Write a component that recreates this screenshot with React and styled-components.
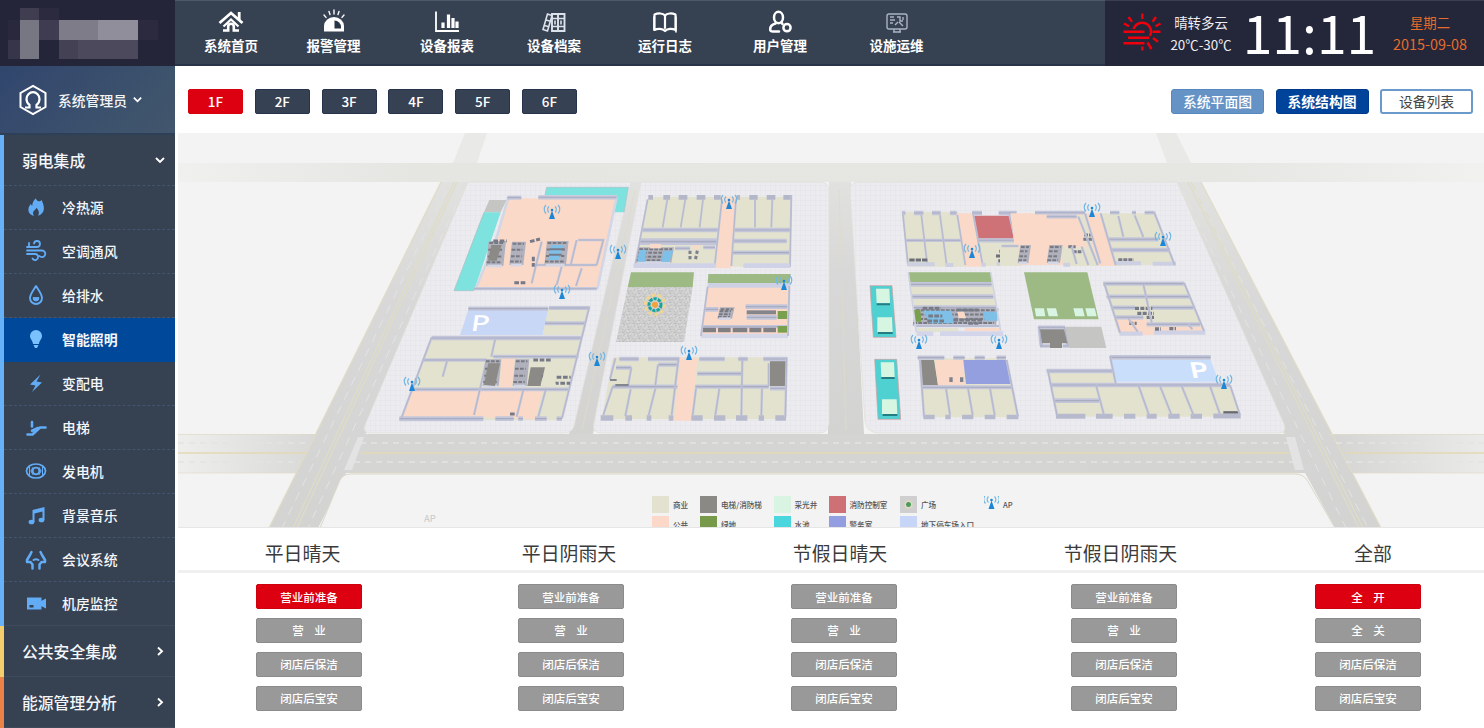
import React from 'react';
import styled, { createGlobalStyle } from 'styled-components';

const GlobalStyle = createGlobalStyle`
  * { box-sizing: border-box; }
  html, body { margin: 0; padding: 0; }
  body {
    width: 1484px;
    height: 728px;
    overflow: hidden;
    background: #fff;
    font-family: "Noto Sans CJK SC", sans-serif;
  }
`;

const Page = styled.div`
  width: 1484px;
  height: 728px;
  display: flex;
  flex-direction: column;
  overflow: hidden;
`;

const Header = styled.header`
  flex: none;
  height: 66px;
  display: flex;
  background: #364152;
  box-shadow: inset 0 1px 0 #4d5969, inset 0 -2px 0 #2a3448;
`;

const Logo = styled.div`
  width: 175px;
  height: 66px;
  background: #242539;
  svg { display: block; }
`;

const Nav = styled.nav`
  flex: 1;
  display: flex;
  padding-left: 28px;
`;

const NavItem = styled.a`
  width: 56px;
  margin-right: ${(p) => p.$gap}px;
  padding-top: 9px;
  display: flex;
  flex-direction: column;
  align-items: center;
  color: #fff;
  font-size: 13.5px;
  font-weight: 700;
  line-height: 18px;
  white-space: nowrap;
  svg { display: block; width: 26px; height: 26px; margin-bottom: 1px; }
`;

const Status = styled.div`
  width: 379px;
  display: flex;
  background: #24263a;
  color: #f2f2f5;
  box-shadow: inset 0 1px 0 #3c3f50;
`;

const SunIcon = styled.svg`
  width: 40px;
  height: 40px;
  margin: 12px 0 0 17px;
`;

const StatusColumn = styled.div`
  width: ${(p) => p.$width}px;
  padding-top: 11px;
  display: flex;
  flex-direction: column;
  align-items: center;
  color: ${(p) => p.$color};
  font-size: 13.4px;
  line-height: 22px;
  white-space: nowrap;
`;

const DateText = styled.span`
  font-size: 14.4px;
`;

const Clock = styled.div`
  width: 148px;
  padding-right: 9px;
  text-align: center;
  color: #fff;
  font-size: 53.5px;
  line-height: 61px;
`;

const Body = styled.div`
  flex: 1;
  display: flex;
  min-height: 0;
`;

const Sidebar = styled.aside`
  width: 175px;
  flex: none;
  display: flex;
  flex-direction: column;
  background: #364152;
  color: #f4f6f9;
`;

const UserBox = styled.div`
  height: 69px;
  padding: 0 0 0 19px;
  display: flex;
  align-items: center;
  background: linear-gradient(135deg, #31466d, #42576c);
  border-bottom: 2px solid #2e4057;
  font-size: 13.8px;
  font-weight: 500;
  svg { flex: none; }
`;

const UserName = styled.span`
  margin: 0 5px 0 11px;
`;

const Group = styled.section`
  border-left: 4px solid ${(p) => p.$accent};
`;

const GroupTitle = styled.div`
  height: 51px;
  padding: 0 9px 0 18px;
  display: flex;
  align-items: center;
  justify-content: space-between;
  font-size: 15.8px;
  font-weight: 500;
  border-bottom: ${(p) => (p.$open ? '1px dashed #435570' : '1px solid #3e4b5d')};
`;

const MenuItem = styled.div`
  height: 44px;
  padding: 0 0 1px 20px;
  display: flex;
  align-items: center;
  gap: 14px;
  font-size: 13.9px;
  font-weight: ${(p) => (p.$active ? 700 : 500)};
  background: ${(p) => (p.$active ? '#00489a' : 'transparent')};
  border-bottom: 1px ${(p) => (p.$plain ? 'solid #3e4b5d' : p.$active ? 'solid #00489a' : 'dashed #435570')};
  svg { width: 24px; height: 24px; flex: none; color: #62abf5; }
`;

const Main = styled.main`
  flex: 1;
  min-width: 0;
  display: flex;
  flex-direction: column;
  padding-left: 3px;
`;

const Toolbar = styled.div`
  height: 67px;
  padding: 3px 11px 0 10px;
  display: flex;
  align-items: center;
  justify-content: space-between;
`;

const ButtonRow = styled.div`
  display: flex;
  gap: ${(p) => p.$gap}px;
`;

const FloorButton = styled.button`
  width: 55px;
  height: 25px;
  padding: 0;
  border: 1px solid ${(p) => (p.$active ? '#d9000f' : '#26334a')};
  border-radius: 2px;
  background: ${(p) => (p.$active ? '#dc0010' : '#364153')};
  color: #fff;
  font: 500 13.5px/22px "Noto Sans CJK SC", sans-serif;
`;

const viewTones = {
  soft: { bg: '#6593c6', line: '#5687be', text: '#fff', weight: 500 },
  solid: { bg: '#00439a', line: '#00398c', text: '#fff', weight: 700 },
  outline: { bg: '#fff', line: '#6a9acb', text: '#444', weight: 400 },
};

const ViewButton = styled.button`
  width: 93px;
  height: 25px;
  padding: 0;
  border: ${(p) => (p.$tone === 'outline' ? 2 : 1)}px solid ${(p) => viewTones[p.$tone].line};
  border-radius: 3px;
  background: ${(p) => viewTones[p.$tone].bg};
  color: ${(p) => viewTones[p.$tone].text};
  font-family: "Noto Sans CJK SC", sans-serif;
  font-size: 13.8px;
  font-weight: ${(p) => viewTones[p.$tone].weight};
  line-height: 20px;
`;

const MapPanel = styled.div`
  position: relative;
  height: 395px;
  overflow: hidden;
  background: #f3f3f3;
  border-bottom: 1px solid #e6e6e6;
  svg { display: block; }
`;

const Legend = styled.div`
  position: absolute;
  left: 474px;
  top: 363px;
  display: grid;
  grid-template-columns: 48px 73.5px 55px 71.5px 84px 60px;
  row-gap: 3px;
`;

const LegendItem = styled.div`
  height: 17px;
  display: flex;
  align-items: center;
  gap: 4px;
  color: #555;
  font-size: 7.6px;
  font-weight: 500;
  line-height: 15px;
  white-space: nowrap;
`;

const Swatch = styled.i`
  width: 17px;
  height: 17px;
  background: ${(p) => p.$color};
`;

const MapNote = styled.span`
  position: absolute;
  left: 246px;
  top: 379px;
  color: #c9c9c9;
  font-size: 9.5px;
  line-height: 12px;
`;

const SceneTitles = styled.div`
  height: 45px;
  display: grid;
  grid-template-columns: 249px 284px 258px 303px 202px;
  border-bottom: 3px solid #f0f0f0;
`;

const SceneTitle = styled.h2`
  margin: 0;
  text-align: center;
  color: #3a3a3a;
  font-size: 18.9px;
  font-weight: 400;
  line-height: 49px;
`;

const Scenes = styled.div`
  padding-top: 11px;
  display: grid;
  grid-template-columns: 262px 262px 284px 276px 212px;
`;

const SceneColumn = styled.div`
  display: flex;
  flex-direction: column;
  align-items: center;
  gap: 8.9px;
`;

const SceneButton = styled.button`
  width: 106px;
  height: 25px;
  padding: 0;
  border: 1px solid ${(p) => (p.$active ? '#cf000d' : '#8b8b8b')};
  border-radius: 2px;
  background: ${(p) => (p.$active ? '#dc0010' : '#999')};
  color: #fff;
  font: 500 11.5px/20px "Noto Sans CJK SC", sans-serif;
  white-space: pre;
`;

/* ---------- icons ---------- */

const line = { fill: 'none', stroke: 'currentColor', strokeWidth: 2, strokeLinecap: 'round', strokeLinejoin: 'round' };

const navItems = [
  {
    label: '系统首页', gap: 46.5,
    icon: (
      <g fill="none" stroke="currentColor" strokeWidth="2.8">
        <path d="M1.5 14 13 4l11.500 10" />
        <path d="M21.200 3v8" />
        <path d="M5 21.500h5.200v-4a2.800 2.800 0 0 1 5.600 0v4H21" strokeWidth="2.600" />
        <path d="M5.500 17.500 13 10.500l7.500 7" strokeWidth="2.200" />
      </g>
    ),
  },
  {
    label: '报警管理', gap: 57.5,
    icon: (
      <g>
        <path d="M3 22.500V17a10 9 0 0 1 20 0v5.500z" fill="currentColor" />
        <path d="M13.500 11.500a6.500 6.500 0 0 1 6.500 6.500v1.500h-6.500z" fill="#2a3447" />
        <path d="M3 6l2 2.400M8 2.500l1 3M13 1v4M18 2.500l-1 3M23 6l-2 2.400" {...line} strokeWidth="1.400" />
      </g>
    ),
  },
  {
    label: '设备报表', gap: 51,
    icon: (
      <g fill="none" stroke="currentColor">
        <path d="M2 2.500V22h23" strokeWidth="1.800" />
        <path d="M9 13.500V19M14.500 5.500V19M19 9V19M23 12.500V19" strokeWidth="3.200" />
      </g>
    ),
  },
  {
    label: '设备档案', gap: 55,
    icon: (
      <g fill="none" stroke="#dce2ea" strokeWidth="1.600">
        <path d="M6.500 5 2 20.500l4.500 1.500L11 6.500zM5 11l4.500 1.200M3.500 16.500l4.500 1.200" />
        <path d="M11 5h12.500v17H11zM17 5v17" strokeWidth="1.900" />
        <path d="M11 9.500h13M11 17.500h13M14 11.500v4M20 11.500v4" />
      </g>
    ),
  },
  {
    label: '运行日志', gap: 59,
    icon: (
      <g {...line} strokeWidth="2.200">
        <path d="M13 6.500C11 4 6 4 2.500 5.500V21c3-1.600 8-1.600 10.500 1 2.500-2.600 7.500-2.600 10.500-1V5.500C20 4 15 4 13 6.500zV19" />
        <path d="M2 8v13M24 8v15" strokeWidth="1.600" />
      </g>
    ),
  },
  {
    label: '用户管理', gap: 60.5,
    icon: (
      <g {...line} strokeWidth="2.500">
        <ellipse cx="11.500" cy="8.500" rx="4.500" ry="5.700" />
        <path d="M8.500 14.500C5 15.500 3 17.500 3.200 20.500c.1 1.500 1 2 2.800 2h6M14.500 13.500l1 1.500" />
        <circle cx="20" cy="18.700" r="3.600" />
      </g>
    ),
  },
  {
    label: '设施运维', gap: 0,
    icon: (
      <g fill="none" stroke="#aab3c0" strokeWidth="1.400">
        <rect x="3" y="5" width="20" height="15" rx="2" />
        <path d="M9 23h8M10 20v3M16 20v3" />
        <path d="M6 8h4M6 11h5M6 14h3M13 8h3v4h3M19 8v3M11 16l3-3M15 13l4 4" />
      </g>
    ),
  },
];

const menu = [
  { label: '冷热源', icon: <path fill="currentColor" d="M12 2c1 4 5 4 6.500 1.500.8 3 2.500 5 2.500 9.500 0 4-2.500 7-6.500 8.500 2-4 .5-6.500-2-9-.5 2-2 2.500-3 4-1 1.500-.6 3.500.5 5C5.500 20.500 3.500 17.500 3.800 14.500 4 11 5.500 9.800 6.500 8c.5 1 .7 2 1.500 2.500C8 6.500 10 4 12 2z" transform="translate(1 1.500) scale(.9)" /> },
  {
    label: '空调通风',
    icon: (
      <g {...line} strokeWidth="1.800">
        <path d="M3 8h10a3 3 0 1 0-3-3.500M3 11.500h15a3.300 3.300 0 1 1-2.500 5.500M3 15h8a3 3 0 1 1-2.500 4.500M5 4v4" />
      </g>
    ),
  },
  { label: '给排水', icon: <g {...line} strokeWidth="1.900"><path d="M12 3C9.500 7 6 11 6 15a6 6 0 0 0 12 0c0-4-3.500-8-6-12z" /><path d="M9 15a3 3 0 0 0 6 0z" fill="currentColor" strokeWidth="1" /></g> },
  { label: '智能照明', active: true, icon: <g fill="#7cc1ff"><path d="M12 3a6 6 0 0 1 6 6c0 3-2.700 4.500-3 8H9c-.3-3.500-3-5-3-8a6 6 0 0 1 6-6z" /><path d="M9.500 18h5l-1.500 3h-2z" /></g> },
  { label: '变配电', icon: <path fill="currentColor" d="M16.500 3.500 6 13.500l5.500 1L8 21l10-9.500-5.500-1z" /> },
  { label: '电梯', icon: <g {...line} strokeWidth="2.600"><path d="M3.500 19.500h5L16 12.500h5.500M8 15.800l6-2.800" /><path d="M8 7v4.500" /></g> },
  { label: '发电机', icon: <g {...line} strokeWidth="1.700"><ellipse cx="12" cy="12" rx="9.500" ry="7" /><circle cx="12" cy="12" r="3.300" /><path d="M5.500 8v8M18.500 8v8M9 8.500 7 12l2 3.500M15 8.500l2 3.500-2 3.500" strokeWidth="1.100" /></g> },
  { label: '背景音乐', icon: <g fill="currentColor"><ellipse cx="7.500" cy="19" rx="2.900" ry="2.300" /><ellipse cx="17.500" cy="17" rx="2.900" ry="2.300" /><path d="M8.500 19V7l12-3v13h-2V8.500l-8 2V19z" /></g> },
  {
    label: '会议系统',
    icon: (
      <g {...line} strokeWidth="2.500">
        <path d="M7.500 5 6 8l-3 5v2h3.500l2 2.500v4M16.500 5 18 8l3 5v2h-3.500l-2 2.500v4" />
        <path d="M9.500 13q2.500-1.600 5 0" strokeWidth="2" />
      </g>
    ),
  },
  { label: '机房监控', plain: true, icon: <g fill="currentColor"><path d="M3 6.500h14.500v12H3z" /><path d="m17 10 5-2.500v10L17 15z" /><path d="M5.500 14h4v2.500h-4z" fill="#364152" /></g> },
];

const Chevron = ({ right, size = 12 }) => (
  <svg width={size} height={size} viewBox="0 0 12 12" fill="none" stroke="#fff" strokeWidth="1.900">
    <path d={right ? 'M4 2.500 8 6.300 4 10' : 'M2 4l4 4 4-4'} />
  </svg>
);

/* ---------- floor map ---------- */

const tone = {
  shop: '#e3e2cf', pub: '#fbd9c8', green: '#9dba84', lawn: '#79a04c', water: '#7ee2df', pool: '#4bd0d3',
  park: '#c9d7f7', park2: '#c9defb', dark: '#8b8a87', fire: '#cf7277', guard: '#949fe0', grey: '#c5c6c3', mint: '#daf5e3',
  blue: '#7fc0e8',
};

const Room = ({ k, p }) => <polygon fill={tone[k]} points={p} />;

const Wall = ({ d, w = 10 }) => (
  <g fill="none">
    <path d={d} stroke="#c3c6da" strokeWidth={w} />
    <path d={d} stroke="#a9acbf" strokeWidth={w / 4} />
  </g>
);

const Core = ({ x, y, w = 36, h = 60 }) => (
  <g transform={`translate(${x} ${y})`}>
    <path d={`M6 0h${w}l-8 ${h}h${-w}z`} fill="#b0b1bc" />
    <path d={`M8 6h${w - 8}M5 ${h * 0.35}h${w - 10}M3 ${h * 0.62}h${w - 10}M0 ${h * 0.85}h${w - 8}`} stroke="#787a82" strokeWidth="6" strokeDasharray="11 4" />
    <path d={`M2 ${h}h${w - 8}`} stroke="#d5d7e6" strokeWidth="8" />
  </g>
);

const Antenna = ({ x, y }) => (
  <g transform={`translate(${x} ${y})`}>
    <path d="M0-8.500 3 0h-6z" fill="#1b87d6" />
    <circle cy="-9" r="1.300" fill="#1b87d6" />
    <path d="M-3-12.500a4 4 0 0 0 0 6M3-12.500a4 4 0 0 1 0 6M-6-14a6 6 0 0 0 0 8.500M6-14a6 6 0 0 1 0 8.500" fill="none" stroke="#74b7e2" strokeWidth="1.200" />
  </g>
);

const antennas = [
  [552, 219], [618, 259], [562, 299], [597, 366], [412, 391], [729, 209], [784, 290],
  [689, 360], [972, 258], [919, 349], [999, 349], [1092, 217], [1163, 246], [1224, 389],
];

const Roads = () => (
  <g>
    <path d="M178 163H1484v19H178z" fill="url(#fadeTop)" />
    <path d="M465 133h22l-10 30h-24zM1156 133h20l15 30h-24z" fill="#e9e9e8" />
    <path d="M178 434H1484v39H178z" fill="url(#fadeRoad)" />
    <path d="M441 182h28L366 434 318 528h-49z" fill="url(#side)" />
    <path d="M1176 182h25L1381 528h-46L1284 434z" fill="url(#side)" />
    <path d="M629 182h13l-49 252h-24zM829 182h22l13 252h-36z" fill="url(#side)" />
    <g stroke="#e0dcc6" strokeWidth="1.200" fill="none">
      <path d="M441 182 269 528M454 182 293 528M457 182 297 528M469 182 365 434" />
      <path d="M1201 182l180 346M1188 182l171 346M1191 182l172 346M1176 182l109 252" />
      <path d="M178 434.500h138M1328 434.500h156M178 473h118M1354 473h130M350 473h950" opacity=".7" />
      <path d="M635 190 582 430M839 190l7 240" opacity=".7" />
    </g>
    <path d="M178 453h130M362 453h928M1345 453h139" stroke="#e3d9b4" strokeWidth="1.500" />
    <path d="M178 443H310M360 443H1290M1336 443H1484M178 462H300M354 462H1296M1346 462H1484" stroke="#e4e4e4" strokeWidth="1.600" strokeDasharray="6 5" />
    <path d="M446 190 282 528M463 190 308 528M1182 190l164 338M1195 190l173 338" stroke="#e4e4e4" strokeDasharray="9 7" fill="none" />
    <path d="M358 437l-14 33h8l12-33zM1286 437l9 33h9l-9-33z" fill="#e3e3e3" />
    <path d="M320 528l20-48q3-6 11-6h944q8 0 12 6l28 48z" fill="#f3f3f3" />
    <path d="M320 528l20-48q3-6 11-6h944q8 0 12 6l28 48" fill="none" stroke="#dcd9c9" />
  </g>
);

const blockShapes =
  'M468 182H631L574 426q-2 7-10 7H371q-9 0-6-8zM641 182h179q9 0 9 9v232q-1 10-10 10H602q-11 0-8-10zM859 182h318l107 242q3 9-5 9H879q-12 0-14-12L850 191q0-9 9-9z';

const BlockWest = () => (
  <g transform="translate(350 130) scale(.33333)">
    <Room k="water" p="590,172 835,172 822,247 792,247 800,195 585,195" />
    <Room k="grey" p="418,210 470,210 452,247 402,247" />
    <Room k="water" p="402,247 452,247 372,482 312,482" />
    <path d="M590 172H835L822 247M585 195l5-23M402 247 312 482h60" fill="none" stroke="#a9c4c8" strokeWidth="2.500" />
    <Room k="pub" p="472,205 800,205 740,472 380,472 440,320" />
    <path d="M740 475H378L440 322 475 203M800 200 742 478" fill="none" stroke="#d3d6e4" strokeWidth="8" />
    <Wall d="M565 202H800" w={13} />
    <Wall d="M472 203h42" w={12} />
    <Wall d="M372 476H740" w={9} />
    <Wall d="M545 460 575 335M620 465 635 410M678 468 695 415M545 405h195M685 330h75l-20 75M680 330 662 405" w={7} />
    <Core x={410} y={333} w={52} h={75} /><Room k="dark" p="424,345 455,345 440,392 414,392" />
    <Core x={480} y={335} w={42} h={70} />
    <Core x={585} y={333} w={65} h={72} />
    <Room k="blue" p="604,345 640,345 625,390 595,390" />
    <path d="M600 358h42M597 374h38" stroke="#777b88" strokeWidth="6" />
    <path d="M430 333h40M540 335l30-8M493 458h38M550 380v30" stroke="#777a86" strokeWidth="9" strokeDasharray="14 5" fill="none" />

    <Room k="park" p="355,540 595,540 578,615 330,615" />
    <Wall d="M355 536H595M355 536h75" w={13} />
    <Room k="shop" p="597,530 718,530 700,615 578,615" />
    <Room k="shop" p="245,620 695,620 635,870 150,870" />
    <Room k="pub" p="185,782 385,782 370,862 155,862" />
    <Room k="pub" p="392,775 580,775 555,868 372,860" />
    <Room k="pub" p="455,680 495,680 485,780 450,780" />
    <Wall d="M597 534h122M585 580h120" w={12} />
    <Wall d="M245 624H695" w={13} /><Wall d="M218 690H410M430 680H685" w={11} />
    <Wall d="M182 778H655" w={11} /><Wall d="M148 866H400" w={15} />
    <Wall d="M436 866h55M505 866h14M555 866h35M620 866h16" w={14} />
    <Wall d="M718 530 636 865M436 625l-12 55M292 690l-14 50M245 622l-90 240M410 690l-38 165M520 780l-20 80M587 780l-22 80" w={7} />
    <Core x={400} y={688} w={48} h={80} /><Room k="dark" p="415,700 450,700 435,768 402,765" />
    <Core x={490} y={688} w={42} h={80} />
    <Room k="dark" p="542,712 585,712 572,768 532,768" />
    <path d="M550 690h55M620 742h42M612 760h48M575 740h20M480 852h18" stroke="#777a86" strokeWidth="9" strokeDasharray="14 5" />
    <Room k="shop" p="580,735 612,735 618,765 572,765" />
    <text fill="#fff" fontSize="66" fontFamily="Noto Sans" fontWeight="500" transform="translate(360 602) skewX(-8) scale(1.400 1)">P</text>
  </g>
);

const BlockMiddle = () => (
  <g transform="translate(580 130) scale(.33333)">
    <Room k="shop" p="205,200 635,200 630,410 165,410" />
    <Room k="pub" p="428,200 468,200 453,415 408,415" />
    <path d="M205 202h14M250 202h20M296 202h26M350 202h26M402 202h20M470 202h10M508 202h25M560 202h26M610 202h25" stroke="#b4b7ca" strokeWidth="14" />
    <Wall d="M185 300H414M465 300H630M460 333H620M457 368H628" w={13} />
    <Wall d="M180 335H412" w={20} />
    <Wall d="M262 208 248 292M316 208l-14 84M369 208l-10 84M426 208l-22 200M525 208v84M577 208l-3 84M634 196l-4 215M468 208l-14 200M203 208l-38 200" w={6} />
    <Core x={170} y={352} w={106} h={46} />
    <Room k="blue" p="178,360 200,360 195,395 172,395" /><Room k="blue" p="250,362 280,362 268,396 244,396" />
    <Room k="pub" p="210,342 243,342 243,355 210,355" /><Room k="pub" p="340,345 356,345 356,358 340,358" />
    <Wall d="M285 355h45M370 352h35" w={11} />
    <path d="M330 362v28M352 362l-6 28" stroke="#7e808a" strokeWidth="9" strokeDasharray="10 6" />
    <path d="M160 407H407M490 407H630" stroke="#d0d3e7" strokeWidth="14" />

    <Room k="green" p="153,427 342,427 338,472 143,472" />
    <path d="M143 472H338L312 636H108z" fill="url(#gravel)" />
    <g transform="translate(225 524)">
      <circle r="29" fill="none" stroke="#f3d58e" strokeWidth="9" strokeDasharray="11 7" />
      <circle r="18" fill="none" stroke="#1aa39c" strokeWidth="9" strokeDasharray="10 3" />
      <circle r="9" fill="#f0a33b" />
    </g>
    <Room k="green" p="385,432 632,432 629,460 383,460" />
    <Room k="pub" p="383,470 628,470 622,612 366,612" />
    <path d="M383 466H630" stroke="#ced1e4" strokeWidth="14" />
    <path d="M363 618H624" stroke="#d5d8e8" strokeWidth="13" />
    <Core x={414} y={532} w={44} h={34} />
    <Wall d="M375 538h40M497 530h125M500 562h90" w={14} />
    <path d="M500 547h88" stroke="#85868c" strokeWidth="12" />
    <Wall d="M366 590H622" w={10} />
    <path d="M368 600h40M414 600h38M458 600h44M508 600h36M550 600h38" stroke="#7f7f84" strokeWidth="13" />
    <Room k="lawn" p="593,543 622,543 622,567 593,567" /><Room k="lawn" p="593,588 622,588 622,608 593,608" />
    <Wall d="M628 468l-4 150M383 470l-20 148" w={6} />

    <Room k="shop" p="98,682 622,682 618,868 65,868" />
    <Room k="pub" p="300,684 352,684 334,872 282,872" />
    <Room k="dark" p="570,690 620,690 620,768 570,768" />
    <Wall d="M118 687h58M204 687h94M358 687h76M475 687h28M550 687h70" w={14} />
    <Wall d="M108 713h46M235 704h62M352 731H486M98 770H292M346 770H566M570 775h48" w={13} />
    <path d="M62 864h38M136 864h20M200 864h14M266 864h14M334 864h34M402 864h34M468 864h34M536 864h16M586 864h32" stroke="#b7bacd" strokeWidth="16" />
    <Wall d="M106 685 90 748M98 770 70 855M154 713l-10 55M152 778l-16 80M234 704l-8 62M226 776l-20 80M295 690l-20 165M348 776l-10 80M418 776l-12 80M487 690l-3 168M546 776l-2 80M566 700v68M620 682l-4 180" w={7} />
    <path d="M90 750h20M106 765h40" stroke="#84868f" strokeWidth="6" />
  </g>
);

const Pool = ({ x, y, h = 155 }) => (
  <g transform={`translate(${x} ${y})`}>
    <path d={`M0 0H66L78 ${h}H10z`} fill="#4fd0d1" stroke="#d49ca0" strokeWidth="2" />
    <path d={`M18 9h40l2 44H20zM22 ${h - 60}h44l2 44H22z`} fill="#d7f6e2" />
    <path d={`M20 56h40M24 ${h - 13}h44`} stroke="#237d81" strokeWidth="6" />
  </g>
);

const BlockEast = () => (
  <g>
    <g transform="translate(840 130) scale(.33333)">
      <Pool x={90} y={467} />
      <Pool x={104} y={688} h={180} />
      <Room k="shop" p="186,245 355,245 378,410 202,410" />
      <Room k="pub" p="352,250 400,250 425,410 378,410" />
      <Room k="fire" p="400,257 508,257 522,326 412,326" />
      <Room k="shop" p="412,335 530,335 545,408 428,408" />
      <Wall d="M412 331h115" w={13} /><Wall d="M198 331h168" w={10} />
      <Wall d="M186 249h10M222 249h28M276 249h26M330 249h20M396 249h30M476 249h54" w={14} />
      <Wall d="M188 245l16 160M244 255l18 150M300 255l20 150M352 255l24 150M400 255l28 150M508 255l18 76" w={6} />
      <path d="M202 403h82M316 405h24M425 404h12M470 401h34" stroke="#cdd0e1" strokeWidth="12" />
      <path d="M208 390h54M468 378h30M478 364h20M475 392h28" stroke="#6d6f78" strokeWidth="9" strokeDasharray="16 3" />

      <Room k="green" p="205,427 452,427 456,456 210,456" />
      <Room k="shop" p="210,456 456,456 470,530 220,530" />
      <Wall d="M210 463H455M215 500H460M220 533H470" w={14} />
      <Core x={220} y={535} w={250} h={52} />
      <Room k="blue" p="250,542 335,542 342,580 268,580" /><Room k="blue" p="428,545 470,545 473,572 434,572" />
      <path d="M248 535h55M265 558h42M262 573h50M350 540h65M340 570h90M385 582h30" stroke="#777b86" strokeWidth="9" strokeDasharray="14 4" />
      <Room k="pub" p="352,545 372,545 378,565 356,565" /><Room k="lawn" p="221,540 241,540 244,575 225,575" />
      <Room k="shop" p="228,594 355,594 355,606 228,606" /><Room k="pub" p="375,594 480,594 480,604 375,604" />
      <path d="M230 611h50M300 611h190" stroke="#d3d6ea" strokeWidth="14" />
      <Wall d="M225 588H480" w={7} />
      <path d="M205 427l24 180M452 427l30 175" stroke="#d0d3e1" strokeWidth="5" />

      <Room k="shop" p="236,685 498,685 535,862 250,862" />
      <Room k="dark" p="240,690 282,690 294,766 246,766" />
      <Room k="pub" p="284,690 370,690 374,765 294,765" />
      <Room k="guard" p="370,690 500,690 512,762 378,762" />
      <Wall d="M233 683h80M340 683h34M404 683h30M470 683h28" w={13} />
      <Wall d="M246 772H515" w={12} /><path d="M250 861h34M316 861h16M366 861h34M434 861h32M500 861h35" stroke="#b7bacd" strokeWidth="14" />
      <Wall d="M240 690l12 170M318 775l12 80M384 775l14 80M450 775l14 80M500 690l34 170" w={7} />
      <path d="M333 742v14M365 742v14" stroke="#7f818d" strokeWidth="10" />
    </g>
    <g transform="translate(1000 130) scale(.33333)">
      <Room k="pub" p="32,250 250,250 300,405 50,405" />
      <Room k="shop" p="180,352 278,352 300,408 190,408" />
      <Room k="shop" p="0,345 55,345 58,408 0,408" />
      <Room k="shop" p="232,256 255,256 290,408 270,380" />
      <Room k="shop" p="302,250 462,250 525,402 345,408" />
      <Room k="pub" p="255,250 300,250 347,408 300,408" />
      <Wall d="M105 248h150M140 260h90M330 248h28M396 248h12M434 248h28" w={11} />
      <Wall d="M325 328h150M335 360h175" w={13} />
      <Core x={55} y={345} w={32} h={54} /><Core x={142} y={345} w={40} h={54} />
      <path d="M205 350h22M218 365h26M252 315h24M250 328h30M355 389h46" stroke="#777a87" strokeWidth="9" strokeDasharray="12 3" />
      <path d="M345 400h78M458 401h70M190 404h20" stroke="#cdd0e2" strokeWidth="12" />
      <Wall d="M235 260l58 145M255 250l46 150M302 250l45 155M355 258l15 62M404 256l26 65M462 245l62 160M215 350l15 52M245 350l20 55M5 348h50" w={7} />

      <Room k="green" p="72,427 262,427 296,568 102,568" />
      <path d="M104 535h28l4 24h-28zM140 535h28l6 24h-28zM220 535h28l6 24h-28zM256 535h28l6 24h-28z" fill="#d8f5e4" />
      <Wall d="M115 592h80M120 648h32M188 648h20M118 590l6 58M194 592l10 54" w={11} />
      <Room k="dark" p="120,598 192,598 202,640 186,640 186,654 150,654 150,640 126,640" />
      <Room k="grey" p="196,590 304,590 319,654 208,654" />

      <Room k="shop" p="310,458 550,458 612,610 355,610" />
      <Room k="pub" p="342,568 440,568 465,615 362,615" />
      <Room k="pub" p="455,590 605,590 612,602 460,602" />
      <Wall d="M310 461H552M320 500H568M335 533h70M452 533h128M345 562h85M440 583h160" w={13} />
      <path d="M358 611h70M462 608H616" stroke="#cfd2e5" strokeWidth="13" />
      <path d="M405 535h52M412 550h50M440 562h22M388 580h22M465 597h18M508 596h20" stroke="#757885" strokeWidth="10" strokeDasharray="12 4" />
      <Wall d="M312 458l48 150M430 462l25 115M552 458l60 145M385 565l28 40M565 583l12 15" w={7} />

      <Room k="shop" p="140,720 345,720 345,762 685,762 720,860 170,860" />
      <Room k="park2" p="330,690 632,690 656,755 348,755" />
      <Wall d="M330 682H632" w={14} />
      <Wall d="M140 723H336M152 765H290M162 812H298" w={14} />
      <Wall d="M290 765H690" w={13} />
      <path d="M168 859h88M288 859h50M372 859h34M440 859h30M505 859h34M572 859h34M640 858h82" stroke="#b7bacd" strokeWidth="15" />
      <path d="M670 847h50" stroke="#666974" strokeWidth="7" />
      <Wall d="M143 718l28 138M330 678l18 86M288 765l24 90M415 765l32 90M480 768l35 88M545 768l36 88M630 768l30 85M690 765l30 90" w={7} />
      <text fill="#fff" fontSize="66" fontFamily="Noto Sans" fontWeight="600" transform="translate(573 744) skewX(12) scale(1.400 1)">P</text>
    </g>
  </g>
);

const FloorMap = () => (
  <svg width="1306" height="395" viewBox="178 133 1306 395">
    <defs>
      <linearGradient id="fadeTop"><stop offset="0" stopColor="#f0f0ef" /><stop offset=".18" stopColor="#e5e5e2" /><stop offset=".8" stopColor="#e6e6e3" /><stop offset="1" stopColor="#f1f1f0" /></linearGradient>
      <linearGradient id="fadeRoad"><stop offset="0" stopColor="#eeeeec" /><stop offset=".12" stopColor="#d5d5d4" /><stop offset=".88" stopColor="#d4d4d3" /><stop offset="1" stopColor="#eaeae8" /></linearGradient>
      <linearGradient id="side" x1="0" y1="0" x2="0" y2="1"><stop offset="0" stopColor="#e1e1df" /><stop offset=".35" stopColor="#d8d8d8" /><stop offset="1" stopColor="#d3d3d2" /></linearGradient>
      <pattern id="tiles" width="5" height="5" patternUnits="userSpaceOnUse"><path d="M0 .5h5M.5 0v5" stroke="#dfdfe4" strokeWidth=".6" opacity=".6" /></pattern>
      <pattern id="gravel" width="31" height="27" patternUnits="userSpaceOnUse">
        <path d="M0 0h31v27H0z" fill="#d0d0d0" />
        <path d="M2 3l4 4M13 2l-3 6M20 5l6-2M27 11l-4 5M3 14l7-2M15 12l4 5M6 22l5-4M17 23l6 2M27 21l2 4" stroke="#b1b1b2" strokeWidth="2.500" />
        <path d="M8 4l4-2M17 8l4 2M5 18l-3 2M24 19l4-2M13 20l2 5" stroke="#e8e8e8" strokeWidth="2.500" />
      </pattern>
    </defs>
    <Roads />
    <path d={blockShapes} fill="#ececf0" stroke="#e1dfd7" strokeWidth=".8" />
    <path d={blockShapes} fill="url(#tiles)" />
    <BlockWest />
    <BlockMiddle />
    <BlockEast />
    {antennas.map(([x, y]) => <Antenna key={`${x}-${y}`} x={x} y={y} />)}
  </svg>
);

const legend = [
  ['商业', '#e3e1cf'], ['电梯/消防梯', '#8b8986'], ['采光井', '#daf4e3'], ['消防控制室', '#ce7075'], ['广场', '#cfcfcf', 'dot'], ['AP', null],
  ['公共', '#fbd8c7'], ['绿地', '#76994a'], ['水池', '#4bd5dc'], ['警务室', '#939ee1'], ['地下停车场入口', '#c7d5f8'],
];

const columns = [
  { title: '平日晴天', actions: ['营业前准备', '营    业', '闭店后保洁', '闭店后宝安'], active: 0 },
  { title: '平日阴雨天', actions: ['营业前准备', '营    业', '闭店后保洁', '闭店后宝安'] },
  { title: '节假日晴天', actions: ['营业前准备', '营    业', '闭店后保洁', '闭店后宝安'] },
  { title: '节假日阴雨天', actions: ['营业前准备', '营    业', '闭店后保洁', '闭店后宝安'] },
  { title: '全部', actions: ['全    开', '全    关', '闭店后保洁', '闭店后宝安'], active: 0 },
];

const logoTiles = [
  [20, 8, 19, 12, '#403d50'], [39, 8, 20, 12, '#2c2a3e'], [20, 20, 19, 39, '#777783'], [39, 20, 20, 20, '#3f3b50'],
  [59, 20, 39, 20, '#7d7c88'], [98, 20, 40, 20, '#8f8e9a'], [138, 20, 20, 20, '#2b2a3e'], [8, 40, 12, 19, '#373549'],
  [59, 40, 19, 19, '#444155'], [78, 40, 60, 19, '#4b495b'], [8, 20, 12, 20, '#29283c'],
];

export default function App() {
  return (
    <Page>
      <GlobalStyle />
      <Header>
        <Logo>
          <svg width="175" height="66">
            {logoTiles.map(([x, y, w, h, c]) => <rect key={`${x}-${y}`} x={x} y={y} width={w} height={h} fill={c} />)}
          </svg>
        </Logo>
        <Nav>
          {navItems.map((n) => (
            <NavItem key={n.label} $gap={n.gap}>
              <svg viewBox="0 0 26 26">{n.icon}</svg>
              {n.label}
            </NavItem>
          ))}
        </Nav>
        <Status>
          <SunIcon viewBox="0 0 40 40" fill="none" stroke="#f0000c" strokeWidth="2.400">
            <path d="M11.500 17A9 9 0 1 1 28 24" />
            <path d="M20.300 1.500V7M6.500 5l3.500 4.800M34 5l-3.500 4.800M2 11.500l5 2.700M38.500 11.500l-5 2.700M30.500 19.700h8M31 26l5 3.700M25.500 30.500l4 6.500M20.300 34.500v4M1.500 19.700h21M6 25.700h21M1.500 31.300h21" />
          </SunIcon>
          <StatusColumn $width={78} $color="#eeeef2">
            <span>晴转多云</span>
            <span>20℃-30℃</span>
          </StatusColumn>
          <Clock>11:11</Clock>
          <StatusColumn $width={84} $color="#e66c2c">
            <span>星期二</span>
            <DateText>2015-09-08</DateText>
          </StatusColumn>
        </Status>
      </Header>
      <Body>
        <Sidebar>
          <UserBox>
            <svg width="28" height="32" viewBox="0 0 28 32" fill="none" stroke="#fff" strokeWidth="2">
              <path d="M14 1.800 26.500 9v14L14 30.200 1.500 23V9z" />
              <path d="M6 23.500h4.500V21A7 7.500 0 0 1 7.500 15a6.500 6.800 0 0 1 13 0 7 7.500 0 0 1-3 6v2.500H22" strokeWidth="2.200" />
            </svg>
            <UserName>系统管理员</UserName>
            <Chevron size={11} />
          </UserBox>
          <Group $accent="#66b1f8">
            <GroupTitle $open>弱电集成<Chevron /></GroupTitle>
            {menu.map((m) => (
              <MenuItem key={m.label} $active={m.active} $plain={m.plain}>
                <svg viewBox="0 0 24 24">{m.icon}</svg>
                {m.label}
              </MenuItem>
            ))}
          </Group>
          <Group $accent="#f4cd6c">
            <GroupTitle>公共安全集成<Chevron right /></GroupTitle>
          </Group>
          <Group $accent="#ec8248">
            <GroupTitle>能源管理分析<Chevron right /></GroupTitle>
          </Group>
        </Sidebar>
        <Main>
          <Toolbar>
            <ButtonRow $gap={11.8}>
              {['1F', '2F', '3F', '4F', '5F', '6F'].map((f, i) => <FloorButton key={f} $active={i === 0}>{f}</FloorButton>)}
            </ButtonRow>
            <ButtonRow $gap={11.5}>
              <ViewButton $tone="soft">系统平面图</ViewButton>
              <ViewButton $tone="solid">系统结构图</ViewButton>
              <ViewButton $tone="outline">设备列表</ViewButton>
            </ButtonRow>
          </Toolbar>
          <MapPanel>
            <FloorMap />
            <MapNote>AP</MapNote>
            <Legend>
              {legend.map(([label, color, dot]) => (
                <LegendItem key={label}>
                  {color ? (
                    <Swatch $color={dot ? 'radial-gradient(circle, #4d9b5c 0 2px, #e0dcc0 3px, #cfcfcf 5px)' : color} />
                  ) : (
                    <svg width="15" height="17" viewBox="-7.500 -16 15 17"><Antenna x={0} y={-3} /></svg>
                  )}
                  {label}
                </LegendItem>
              ))}
            </Legend>
          </MapPanel>
          <SceneTitles>
            {columns.map((c) => <SceneTitle key={c.title}>{c.title}</SceneTitle>)}
          </SceneTitles>
          <Scenes>
            {columns.map((c) => (
              <SceneColumn key={c.title}>
                {c.actions.map((a, i) => <SceneButton key={a} $active={c.active === i}>{a}</SceneButton>)}
              </SceneColumn>
            ))}
          </Scenes>
        </Main>
      </Body>
    </Page>
  );
}
